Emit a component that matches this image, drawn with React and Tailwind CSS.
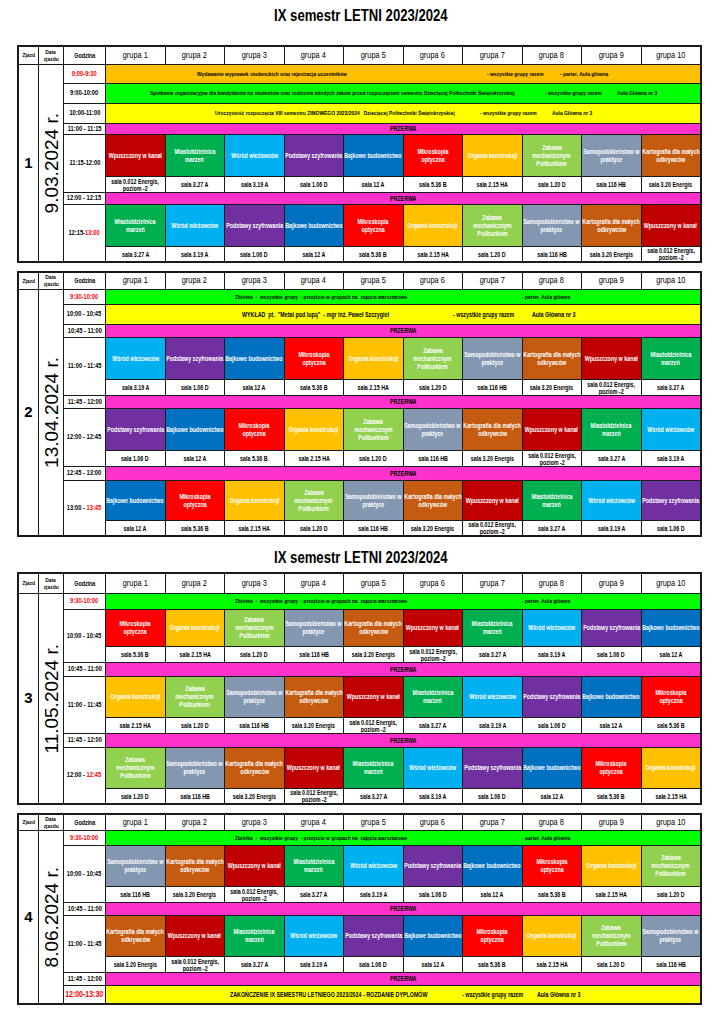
import React from 'react';

// Kolejne zajęcia warsztatowe – grupa N dostaje zajęcia (N - 1 + shift) % 10
const COURSES = [
  { label: ['Wpuszczony w kanał'], bg: 'bg-[#c00000]', room: ['sala 0.012 Energis,', 'poziom -2'] },
  { label: ['Miastołdzielnica', 'marzeń'], bg: 'bg-[#00b050]', room: ['sala 3.27 A'] },
  { label: ['Wśród wieżowców'], bg: 'bg-[#00b0f0]', room: ['sala 3.19 A'] },
  { label: ['Podstawy szyfrowania'], bg: 'bg-[#7030a0]', room: ['sala 1.06 D'] },
  { label: ['Bajkowe budownictwo'], bg: 'bg-[#0070c0]', room: ['sala 12 A'] },
  { label: ['Mikroskopia', 'optyczna'], bg: 'bg-[#ff0000]', room: ['sala 5.36 B'] },
  { label: ['Organia konstrukcji'], bg: 'bg-[#ffc000]', room: ['sala 2.15 HA'] },
  { label: ['Zabawa', 'mechanicznym', 'Poliburkiem'], bg: 'bg-[#92d050]', room: ['sala 1.20 D'] },
  { label: ['Samopodobieństwo w', 'praktyce'], bg: 'bg-[#8497b0]', room: ['sala 116 HB'] },
  { label: ['Kartografia dla małych', 'odkrywców'], bg: 'bg-[#c55a11]', room: ['sala 3.20 Energis'] },
];

const ZBIORKA = {
  type: 'bar',
  time: [['9:30-10:00', true]],
  bg: 'bg-[#00ff00]',
  pl: 'pl-[129px]',
  segs: [
    ['w-[287px]', 'Zbiórka  -  wszystkie grupy  - przejście w grupach na  zajęcia warsztatowe'],
    ['', '- parter, Aula główna'],
  ],
};

const BLOCKS = [
  {
    zjazd: '1',
    date: '9.03.2024 r.',
    rowsClass: 'grid-rows-[17px_18px_19px_19px_10px_41px_15px_11px_41px_14px]',
    span: 'row-span-9',
    rows: [
      {
        type: 'bar',
        time: [['9:00-9:30', true]],
        bg: 'bg-[#ffc000]',
        pl: 'pl-[91px]',
        segs: [
          ['w-[290px]', 'Wydawanie wyprawek studenckich oraz rejestracja uczestników'],
          ['w-[73px]', '- wszystkie grupy razem'],
          ['', '- parter, Aula główna'],
        ],
      },
      {
        type: 'bar',
        time: [['9:00-10:00']],
        bg: 'bg-[#00ff00]',
        pl: 'pl-[44px]',
        segs: [
          ['w-[395px]', 'Spotkanie organizacyjne dla kandydatów na studentów oraz rodziców młodych żaków przed rozpoczęciem semestru Dziecięcej Politechniki Świętokrzyskiej'],
          ['w-[72px]', '- wszystkie grupy razem'],
          ['', 'Aula Główna nr 3'],
        ],
      },
      {
        type: 'bar',
        time: [['10:00-11:00']],
        bg: 'bg-[#ffff00]',
        pl: 'pl-[109px]',
        segs: [
          ['w-[265px]', 'Uroczystość rozpoczęcia VIII semestru ZIMOWEGO 2023/2024   Dziecięcej Politechniki Świętokrzyskiej'],
          ['w-[72px]', '- wszystkie grupy razem'],
          ['', 'Aula Główna nr 3'],
        ],
      },
      { type: 'break', time: [['11:00 - 11:15']] },
      { type: 'session', time: [['11:15-12:00']], shift: 0 },
      { type: 'break', time: [['12:00 - 12:15']] },
      { type: 'session', time: [['12:15-'], ['13:00', true]], shift: 1 },
    ],
  },
  {
    zjazd: '2',
    date: '13.04.2024 r.',
    rowsClass: 'grid-rows-[16px_14px_19px_12px_41px_15px_12px_41px_15px_13px_39px_14px]',
    span: 'row-span-11',
    rows: [
      ZBIORKA,
      {
        type: 'bar',
        big: true,
        time: [['10:00 - 10:45']],
        bg: 'bg-[#ffff00]',
        pl: 'pl-[136px]',
        segs: [
          ['w-[211px]', 'WYKŁAD  pt.  "Metal pod lupą"  - mgr inż. Paweł Szczygieł'],
          ['w-[79px]', '- wszystkie grupy razem'],
          ['', 'Aula Główna nr 3'],
        ],
      },
      { type: 'break', time: [['10:45 - 11:00']] },
      { type: 'session', time: [['11:00 - 11:45']], shift: 2 },
      { type: 'break', time: [['11:45 - 12:00']] },
      { type: 'session', time: [['12:00 - 12:45']], shift: 3 },
      { type: 'break', time: [['12:45 - 13:00']] },
      { type: 'session', time: [['13:00 - '], ['13:45', true]], shift: 4 },
    ],
  },
  {
    zjazd: '3',
    date: '11.05.2024 r.',
    rowsClass: 'grid-rows-[19px_15px_36px_15px_13px_40px_15px_13px_40px_14px]',
    span: 'row-span-9',
    rows: [
      ZBIORKA,
      { type: 'session', time: [['10:00 - 10:45']], shift: 5 },
      { type: 'break', time: [['10:45 - 11:00']] },
      { type: 'session', time: [['11:00 - 11:45']], shift: 6 },
      { type: 'break', time: [['11:45 - 12:00']] },
      { type: 'session', time: [['12:00 - '], ['12:45', true]], shift: 7 },
    ],
  },
  {
    zjazd: '4',
    date: '8.06.2024 r.',
    rowsClass: 'grid-rows-[15px_14px_40px_15px_12px_40px_15px_12px_17px]',
    span: 'row-span-8',
    rows: [
      ZBIORKA,
      { type: 'session', time: [['10:00 - 10:45']], shift: 8 },
      { type: 'break', time: [['10:45 - 11:00']] },
      { type: 'session', time: [['11:00 - 11:45']], shift: 9 },
      { type: 'break', time: [['11:45 - 12:00']] },
      {
        type: 'bar',
        big: true,
        bigTime: true,
        time: [['12:00-13:30', true]],
        bg: 'bg-[#ffff00]',
        pl: 'pl-[124px]',
        segs: [
          ['w-[232px]', 'ZAKOŃCZENIE IX SEMESTRU LETNIEGO 2023/2024 - ROZDANIE DYPLOMÓW'],
          ['w-[75px]', '- wszystkie grupy razem'],
          ['', 'Aula Główna nr 3'],
        ],
      },
    ],
  },
];

const GROUPS = [1, 2, 3, 4, 5, 6, 7, 8, 9, 10];

// Arial Narrow nie ma – Liberation Sans ściśnięty w poziomie
function N({ children, left }) {
  return (
    <span
      className={`inline-block whitespace-pre scale-x-[0.82] ${left ? 'origin-left' : 'origin-center'}`}
    >
      {children}
    </span>
  );
}

function TimeCell({ time, big, span = '' }) {
  return (
    <div
      className={`bg-white flex items-center justify-center font-bold whitespace-nowrap ${
        big ? 'text-[8.5px]' : 'text-[7px]'
      } ${span}`}
    >
      <N>
        {time.map(([t, red], i) => (
          <span key={i} className={red ? 'text-[#ff0000]' : 'text-black'}>
            {t}
          </span>
        ))}
      </N>
    </div>
  );
}

function Rows({ row }) {
  if (row.type === 'bar') {
    return (
      <>
        <TimeCell time={row.time} big={row.bigTime} />
        <div
          className={`col-span-10 flex items-center font-bold text-black ${
            row.big ? 'text-[6.5px]' : 'text-[6px]'
          } ${row.bg} ${row.pl}`}
        >
          {row.segs.map(([w, text], i) => (
            <span key={i} className={`shrink-0 whitespace-nowrap ${w}`}>
              <N left>{text}</N>
            </span>
          ))}
        </div>
      </>
    );
  }

  if (row.type === 'break') {
    return (
      <>
        <TimeCell time={row.time} />
        <div className="col-span-10 bg-[#ff33cc] flex items-center justify-center text-[6.5px] font-bold text-black">
          <N>PRZERWA</N>
        </div>
      </>
    );
  }

  // session – kolorowe zajęcia + wiersz z salami
  const list = GROUPS.map((g) => COURSES[(g - 1 + row.shift) % 10]);
  return (
    <>
      <TimeCell time={row.time} span="row-span-2" />
      {list.map((c, i) => (
        <div
          key={`c${i}`}
          className={`${c.bg} flex flex-col items-center justify-center text-center text-white font-bold text-[6.5px] leading-[8px]`}
        >
          {c.label.map((l) => (
            <N key={l}>{l}</N>
          ))}
        </div>
      ))}
      {list.map((c, i) => (
        <div
          key={`r${i}`}
          className="bg-white flex flex-col items-center justify-center text-center text-black font-bold text-[6.5px] leading-[7px]"
        >
          {c.room.map((l) => (
            <N key={l}>{l}</N>
          ))}
        </div>
      ))}
    </>
  );
}

function Block({ block }) {
  return (
    <div
      className={`grid grid-cols-[19px_24px_41px_repeat(10,minmax(0,1fr))] gap-px bg-[#1a1a1a] border-2 border-[#1a1a1a] w-[685px] ${block.rowsClass}`}
    >
      {/* nagłówek */}
      <div className="bg-white flex items-center justify-center text-[6px] font-bold">
        <N>Zjazd</N>
      </div>
      <div className="bg-white flex flex-col items-center justify-center text-[6px] font-bold leading-[7px]">
        <N>Data</N>
        <N>zjazdu</N>
      </div>
      <div className="bg-white flex items-center justify-center text-[6.5px] font-bold">
        <N>Godzina</N>
      </div>
      {GROUPS.map((g) => (
        <div key={g} className="bg-white flex items-center justify-center text-[9px] text-black">
          <N>grupa {g}</N>
        </div>
      ))}

      <div className={`bg-white flex items-center justify-center text-[15px] font-bold ${block.span}`}>
        {block.zjazd}
      </div>
      <div className={`bg-white flex items-center justify-center ${block.span}`}>
        <span className="[writing-mode:vertical-rl] rotate-180 text-[19px] leading-none whitespace-nowrap">
          {block.date}
        </span>
      </div>

      {block.rows.map((row, i) => (
        <Rows key={i} row={row} />
      ))}
    </div>
  );
}

function Title({ tall }) {
  return (
    <div className={`flex justify-center ${tall ? 'h-[45px] pt-[5px]' : 'h-[35px] pt-[10px]'}`}>
      <h1 className="text-[16px] leading-[22px] font-bold text-black">
        <N>IX semestr LETNI 2023/2024</N>
      </h1>
    </div>
  );
}

export default function App() {
  return (
    <div className="w-[721px] min-h-[1024px] bg-white px-[17px] font-[family-name:'Liberation_Sans',Arial,sans-serif]">
      <Title tall />
      <Block block={BLOCKS[0]} />
      <div className="h-[8px]" />
      <Block block={BLOCKS[1]} />
      <Title />
      <Block block={BLOCKS[2]} />
      <div className="h-[8px]" />
      <Block block={BLOCKS[3]} />
    </div>
  );
}
